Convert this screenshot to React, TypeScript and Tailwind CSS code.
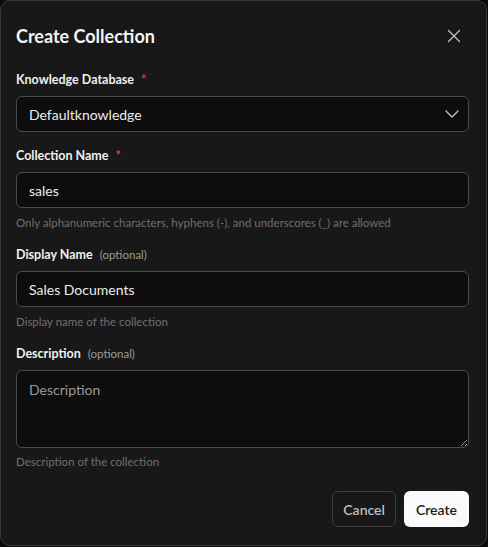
import { X, ChevronDown } from "lucide-react"

export default function App() {
  const font = { fontFamily: 'Lato, "Noto Sans", sans-serif' }
  return (
    <div className="h-[547px] w-[488px] bg-[#0b0b0b]" style={font}>
      <div className="flex h-[546px] w-[487px] flex-col rounded-[10px] border border-[#3a3a3a] bg-[#181818] pt-[21px] pr-[17px] pb-[18px] pl-[15px]">
        <div className="flex items-center justify-between">
          <h2 className="text-[18px] leading-7 font-bold text-[#f4f4f4]">Create Collection</h2>
          <button className="mr-[4px] text-[#c4c4c4]">
            <X className="h-[22px] w-[22px]" strokeWidth={1.4} />
          </button>
        </div>

        <div className="mt-[22px] flex flex-col gap-4">
          <div className="flex flex-col gap-2">
            <label className="text-[12.5px] leading-4 font-bold text-[#f0f0f0]">
              Knowledge Database <span className="ml-1 text-[#d04545]">*</span>
            </label>
            <div className="flex h-9 items-center justify-between rounded-md border border-[#4a4a4a] bg-[#0d0d0d] pr-1 pl-3">
              <span className="text-[14px] text-[#ececec]">Defaultknowledge</span>
              <ChevronDown className="h-6 w-6 text-[#c4c4c4]" strokeWidth={1.25} />
            </div>
          </div>

          <div className="flex flex-col gap-2">
            <label className="text-[12.5px] leading-4 font-bold text-[#f0f0f0]">
              Collection Name <span className="ml-1 text-[#d04545]">*</span>
            </label>
            <input
              defaultValue="sales"
              className="h-9 rounded-md border border-[#4a4a4a] bg-[#0d0d0d] px-3 text-[14px] text-[#ececec] outline-none"
            />
            <p className="-mt-[1px] text-[11.5px] leading-4 text-[#6f6f6f]">
              Only alphanumeric characters, hyphens (-), and underscores (_) are allowed
            </p>
          </div>

          <div className="flex flex-col gap-2">
            <label className="text-[12.5px] leading-4 font-bold text-[#f0f0f0]">
              Display Name <span className="ml-1 text-[11.5px] font-normal text-[#9a9a9a]">(optional)</span>
            </label>
            <input
              defaultValue="Sales Documents"
              className="h-9 rounded-md border border-[#4a4a4a] bg-[#0d0d0d] px-3 text-[14px] text-[#ececec] outline-none"
            />
            <p className="-mt-[1px] text-[11.5px] leading-4 text-[#6f6f6f]">Display name of the collection</p>
          </div>

          <div className="flex flex-col gap-2">
            <label className="text-[12.5px] leading-4 font-bold text-[#f0f0f0]">
              Description <span className="ml-1 text-[11.5px] font-normal text-[#9a9a9a]">(optional)</span>
            </label>
            <textarea
              placeholder="Description"
              className="h-[78px] rounded-md border border-[#4a4a4a] bg-[#0d0d0d] px-3 py-2 text-[14px] text-[#ececec] outline-none placeholder:text-[#9a9a9a]"
            />
            <p className="-mt-[2px] text-[11.5px] leading-4 text-[#6f6f6f]">Description of the collection</p>
          </div>
        </div>

        <div className="mt-auto flex justify-end gap-2">
          <button className="h-9 rounded-md border border-[#3d3d3d] px-[10px] text-[14px] font-semibold text-[#bdbdbd]">
            Cancel
          </button>
          <button className="h-9 rounded-md bg-[#fafafa] px-3 text-[14px] font-semibold text-[#1a1a1a]">
            Create
          </button>
        </div>
      </div>
    </div>
  )
}
